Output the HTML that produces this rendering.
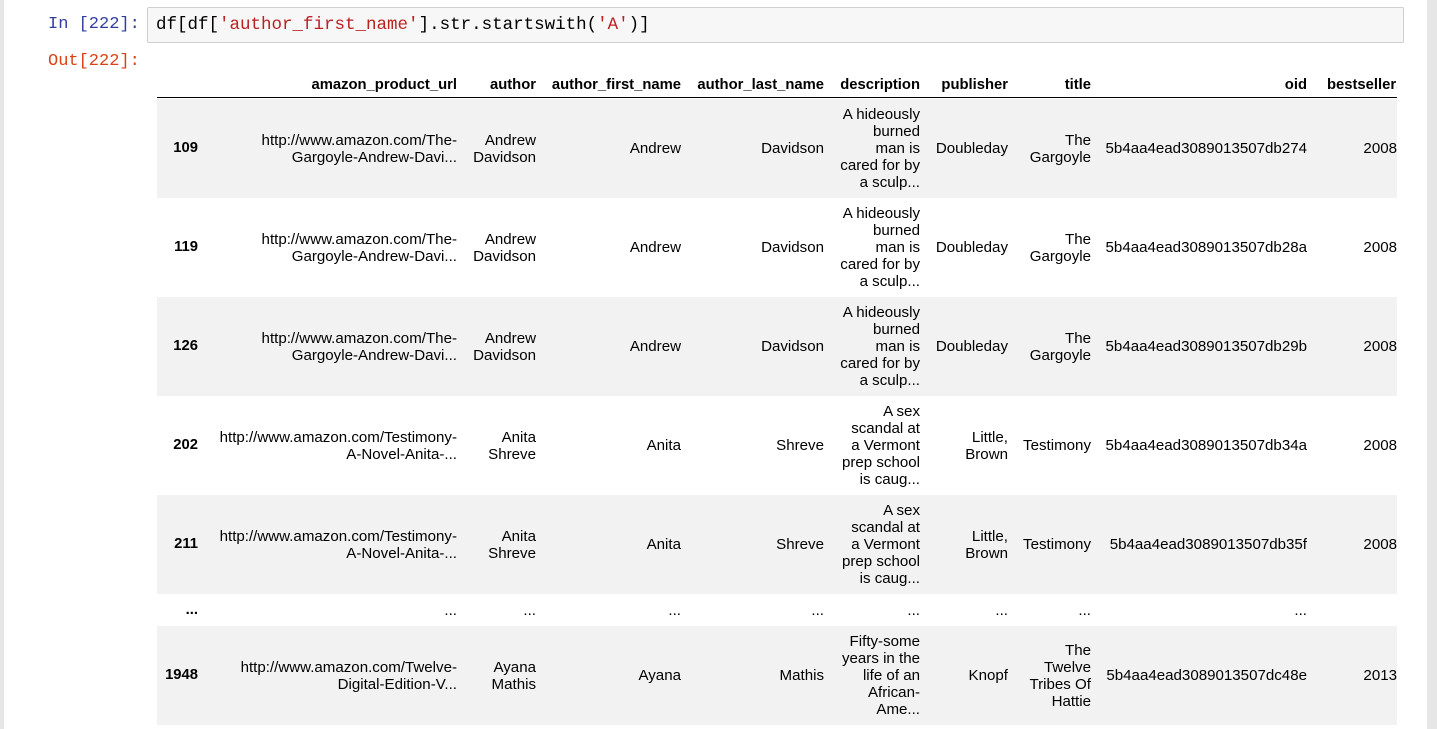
<!DOCTYPE html>
<html><head><meta charset="utf-8"><style>
body{margin:0;width:1437px;height:729px;overflow:hidden;background:#fff;position:relative;font-family:"Liberation Sans",Arial,sans-serif;font-size:15.1px;color:#000}
.lstrip{position:absolute;left:0;top:0;width:4px;height:729px;background:#e6e6e6}
.rstrip{position:absolute;left:1427px;top:0;width:10px;height:729px;background:#e6e6e6}
.prompt{position:absolute;font-family:"Liberation Mono",monospace;font-size:17px}
.inbox{position:absolute;left:147px;top:7px;width:1257px;height:36px;background:#f7f7f7;border:1px solid #cfcfcf;border-radius:2px;font-family:"Liberation Mono",monospace;font-size:17.5px;line-height:35px;padding-left:8px;box-sizing:border-box}
.s{color:#ba2121}
.tbl{position:absolute;left:157px;top:0;width:1240px;height:729px;overflow:hidden}
.row{position:absolute;left:0;width:1240px}
.g{background:#f2f2f2}
.c{position:absolute;top:0;height:100%;display:flex;align-items:center;justify-content:flex-end;text-align:right;line-height:17px;white-space:nowrap}
.b{font-weight:bold;font-size:14.8px}
.hr{position:absolute;left:0;top:97px;width:1240px;height:1px;background:#000}
</style></head><body>
<div class="lstrip"></div><div class="rstrip"></div>
<div class="prompt" style="left:48px;top:15px;color:#303f9f">In&nbsp;[222]:</div>
<div class="inbox">df[df[<span class="s">'author_first_name'</span>].str.startswith(<span class="s">'A'</span>)]</div>
<div class="prompt" style="left:48px;top:52px;color:#d84315">Out[222]:</div>
<div class="tbl">
<div class="row b" style="top:68px;height:34px">
<div class="c" style="right:940px">amazon_product_url</div>
<div class="c" style="right:861px">author</div>
<div class="c" style="right:716px">author_first_name</div>
<div class="c" style="right:573px">author_last_name</div>
<div class="c" style="right:477px">description</div>
<div class="c" style="right:389px">publisher</div>
<div class="c" style="right:306px">title</div>
<div class="c" style="right:90px">oid</div>
<div class="c" style="left:1170px;justify-content:flex-start">bestsellers_date</div>
</div>
<div class="hr"></div>

<div class="row g" style="top:99px;height:99px">
<div class="c b" style="right:1199px">109</div>
<div class="c" style="right:940px">http://www.amazon.com/The-<br>Gargoyle-Andrew-Davi...</div>
<div class="c" style="right:861px">Andrew<br>Davidson</div>
<div class="c" style="right:716px">Andrew</div>
<div class="c" style="right:573px">Davidson</div>
<div class="c" style="right:477px">A hideously<br>burned<br>man is<br>cared for by<br>a sculp...</div>
<div class="c" style="right:389px">Doubleday</div>
<div class="c" style="right:306px">The<br>Gargoyle</div>
<div class="c" style="right:90px">5b4aa4ead3089013507db274</div>
<div class="c" style="right:0px">2008</div>
</div>

<div class="row" style="top:198px;height:99px">
<div class="c b" style="right:1199px">119</div>
<div class="c" style="right:940px">http://www.amazon.com/The-<br>Gargoyle-Andrew-Davi...</div>
<div class="c" style="right:861px">Andrew<br>Davidson</div>
<div class="c" style="right:716px">Andrew</div>
<div class="c" style="right:573px">Davidson</div>
<div class="c" style="right:477px">A hideously<br>burned<br>man is<br>cared for by<br>a sculp...</div>
<div class="c" style="right:389px">Doubleday</div>
<div class="c" style="right:306px">The<br>Gargoyle</div>
<div class="c" style="right:90px">5b4aa4ead3089013507db28a</div>
<div class="c" style="right:0px">2008</div>
</div>

<div class="row g" style="top:297px;height:99px">
<div class="c b" style="right:1199px">126</div>
<div class="c" style="right:940px">http://www.amazon.com/The-<br>Gargoyle-Andrew-Davi...</div>
<div class="c" style="right:861px">Andrew<br>Davidson</div>
<div class="c" style="right:716px">Andrew</div>
<div class="c" style="right:573px">Davidson</div>
<div class="c" style="right:477px">A hideously<br>burned<br>man is<br>cared for by<br>a sculp...</div>
<div class="c" style="right:389px">Doubleday</div>
<div class="c" style="right:306px">The<br>Gargoyle</div>
<div class="c" style="right:90px">5b4aa4ead3089013507db29b</div>
<div class="c" style="right:0px">2008</div>
</div>

<div class="row" style="top:396px;height:99px">
<div class="c b" style="right:1199px">202</div>
<div class="c" style="right:940px">http://www.amazon.com/Testimony-<br>A-Novel-Anita-...</div>
<div class="c" style="right:861px">Anita<br>Shreve</div>
<div class="c" style="right:716px">Anita</div>
<div class="c" style="right:573px">Shreve</div>
<div class="c" style="right:477px">A sex<br>scandal at<br>a Vermont<br>prep school<br>is caug...</div>
<div class="c" style="right:389px">Little,<br>Brown</div>
<div class="c" style="right:306px">Testimony</div>
<div class="c" style="right:90px">5b4aa4ead3089013507db34a</div>
<div class="c" style="right:0px">2008</div>
</div>

<div class="row g" style="top:495px;height:99px">
<div class="c b" style="right:1199px">211</div>
<div class="c" style="right:940px">http://www.amazon.com/Testimony-<br>A-Novel-Anita-...</div>
<div class="c" style="right:861px">Anita<br>Shreve</div>
<div class="c" style="right:716px">Anita</div>
<div class="c" style="right:573px">Shreve</div>
<div class="c" style="right:477px">A sex<br>scandal at<br>a Vermont<br>prep school<br>is caug...</div>
<div class="c" style="right:389px">Little,<br>Brown</div>
<div class="c" style="right:306px">Testimony</div>
<div class="c" style="right:90px">5b4aa4ead3089013507db35f</div>
<div class="c" style="right:0px">2008</div>
</div>

<div class="row" style="top:594px;height:32px">
<div class="c b" style="right:1199px">...</div>
<div class="c" style="right:940px">...</div>
<div class="c" style="right:861px">...</div>
<div class="c" style="right:716px">...</div>
<div class="c" style="right:573px">...</div>
<div class="c" style="right:477px">...</div>
<div class="c" style="right:389px">...</div>
<div class="c" style="right:306px">...</div>
<div class="c" style="right:90px">...</div>
</div>

<div class="row g" style="top:626px;height:99px">
<div class="c b" style="right:1199px">1948</div>
<div class="c" style="right:940px">http://www.amazon.com/Twelve-<br>Digital-Edition-V...</div>
<div class="c" style="right:861px">Ayana<br>Mathis</div>
<div class="c" style="right:716px">Ayana</div>
<div class="c" style="right:573px">Mathis</div>
<div class="c" style="right:477px">Fifty-some<br>years in the<br>life of an<br>African-<br>Ame...</div>
<div class="c" style="right:389px">Knopf</div>
<div class="c" style="right:306px">The<br>Twelve<br>Tribes Of<br>Hattie</div>
<div class="c" style="right:90px">5b4aa4ead3089013507dc48e</div>
<div class="c" style="right:0px">2013</div>
</div>
</div>
</body></html>
